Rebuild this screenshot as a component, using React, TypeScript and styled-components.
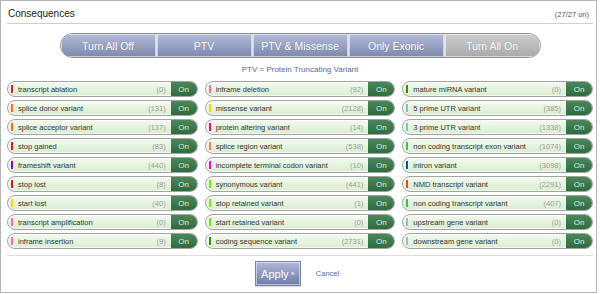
import * as React from 'react'
import styled, { createGlobalStyle } from 'styled-components'

const GlobalStyle = createGlobalStyle`
  body {
    margin: 0;
    background: #fff;
    font-family: 'Liberation Sans', Arial, sans-serif;
  }
`

const Panel = styled.div`
  width: 597px;
  height: 293px;
  box-sizing: border-box;
  border: 1px solid #b4b4b4;
  padding: 0 3px 0 6px;
  display: flex;
  flex-direction: column;
`

const Header = styled.div`
  display: flex;
  justify-content: space-between;
  align-items: baseline;
  height: 23px;
  padding: 7px 4px 0 1px;
  box-sizing: border-box;
  border-bottom: 1px solid #cfcfcf;
`

const Title = styled.div`
  font-size: 10px;
  line-height: 12px;
  color: #222;
`

const Status = styled.div`
  font-size: 7.5px;
  color: #555;
`

const ButtonBar = styled.div`
  align-self: center;
  margin-top: 9px;
  display: flex;
  height: 25px;
  border: 1px solid #8e8e8e;
  border-radius: 13px;
  overflow: hidden;
  box-sizing: border-box;
`

const ModeButton = styled.div<{ $gray?: boolean }>`
  width: 95px;
  display: flex;
  align-items: center;
  justify-content: center;
  font-size: 10.5px;
  color: #fff;
  text-shadow: 0 0 1px rgba(60, 70, 100, 0.35);
  background: ${p =>
    p.$gray
      ? 'linear-gradient(#cdcdcd, #a9a9a9)'
      : 'linear-gradient(#b4bcd9, #7d88ad)'};
  box-shadow: inset 0 0 0 1px rgba(255, 255, 255, 0.55);
  & + & {
    border-left: 1px solid #e2e5f0;
  }
`

const Note = styled.div`
  margin-top: 7px;
  text-align: center;
  font-size: 8px;
  line-height: 10px;
  color: #5a69a3;
`

const Grid = styled.div`
  margin-top: 6px;
  display: grid;
  grid-template-columns: repeat(3, 1fr);
  grid-template-rows: repeat(9, 16px);
  grid-auto-flow: column;
  column-gap: 7px;
  row-gap: 3px;
`

const Pill = styled.div`
  display: flex;
  align-items: center;
  height: 16px;
  box-sizing: border-box;
  border: 1px solid #a3a3a3;
  border-radius: 8px;
  overflow: hidden;
  background: linear-gradient(#f3faef, #d9edd0);
  box-shadow: inset 0 0 0 1px rgba(255, 255, 255, 0.7);
`

const Marker = styled.span<{ $color: string }>`
  width: 2px;
  height: 8px;
  margin-left: 3px;
  background: ${p => p.$color};
  flex: none;
`

const Label = styled.span`
  flex: 1;
  margin-left: 5px;
  font-size: 7.5px;
  color: #333;
  white-space: nowrap;
`

const Count = styled.span`
  font-size: 7.5px;
  color: #9a9a9a;
  margin-right: 5px;
`

const OnBlock = styled.span`
  width: 26px;
  height: 100%;
  display: flex;
  align-items: center;
  justify-content: center;
  font-size: 8px;
  color: #dfeadf;
  background: linear-gradient(#4a875a, #2f6b3f);
  flex: none;
`

const Divider = styled.div`
  margin-top: 6px;
  border-top: 1px solid #dedede;
`

const Footer = styled.div`
  margin-top: 5px;
  display: flex;
  align-items: center;
  justify-content: center;
  gap: 15px;
  padding-right: 6px;
`

const ApplyButton = styled.div`
  width: 46px;
  height: 25px;
  box-sizing: border-box;
  border: 1px solid #7a84a4;
  display: flex;
  align-items: center;
  justify-content: center;
  gap: 2px;
  color: #fff;
  font-size: 11px;
  background: linear-gradient(#b0b9d9, #6f7ba8);
  box-shadow: inset 0 0 0 1px rgba(255, 255, 255, 0.5), 0 1px 1px rgba(0, 0, 0, 0.15);
  & small {
    font-size: 7px;
  }
`

const CancelLink = styled.span`
  font-size: 7.5px;
  color: #5a69a3;
`

const consequences: [string, number, string][] = [
  ['transcript ablation', 0, '#d8241c'],
  ['splice donor variant', 131, '#ff6a21'],
  ['splice acceptor variant', 137, '#ff6a21'],
  ['stop gained', 83, '#e8141c'],
  ['frameshift variant', 440, '#9400d3'],
  ['stop lost', 8, '#e8141c'],
  ['start lost', 40, '#ffd700'],
  ['transcript amplification', 0, '#ff69b4'],
  ['inframe insertion', 9, '#ff69b4'],
  ['inframe deletion', 92, '#ff69b4'],
  ['missense variant', 2128, '#ffd700'],
  ['protein altering variant', 14, '#ff0080'],
  ['splice region variant', 538, '#ff7f50'],
  ['incomplete terminal codon variant', 10, '#ff00ff'],
  ['synonymous variant', 441, '#76ee00'],
  ['stop retained variant', 1, '#76ee00'],
  ['start retained variant', 0, '#76ee00'],
  ['coding sequence variant', 2731, '#458b00'],
  ['mature miRNA variant', 0, '#458b00'],
  ['5 prime UTR variant', 385, '#7ac5cd'],
  ['3 prime UTR variant', 1338, '#7ac5cd'],
  ['non coding transcript exon variant', 1074, '#32cd32'],
  ['intron variant', 3098, '#02599c'],
  ['NMD transcript variant', 2291, '#ff4500'],
  ['non coding transcript variant', 407, '#32cd32'],
  ['upstream gene variant', 0, '#a2b5cd'],
  ['downstream gene variant', 0, '#a2b5cd'],
]

const modes = ['Turn All Off', 'PTV', 'PTV & Missense', 'Only Exonic', 'Turn All On']

const App: React.FC = () => (
  <>
    <GlobalStyle />
    <Panel>
      <Header>
        <Title>Consequences</Title>
        <Status>(27/27 on)</Status>
      </Header>
      <ButtonBar>
        {modes.map(m => (
          <ModeButton key={m} $gray={m === 'Turn All On'}>
            {m}
          </ModeButton>
        ))}
      </ButtonBar>
      <Note>PTV = Protein Truncating Variant</Note>
      <Grid>
        {consequences.map(([name, count, color]) => (
          <Pill key={name}>
            <Marker $color={color} />
            <Label>{name}</Label>
            <Count>({count})</Count>
            <OnBlock>On</OnBlock>
          </Pill>
        ))}
      </Grid>
      <Divider />
      <Footer>
        <ApplyButton>
          Apply <small>»</small>
        </ApplyButton>
        <CancelLink>Cancel</CancelLink>
      </Footer>
    </Panel>
  </>
)

export default App
